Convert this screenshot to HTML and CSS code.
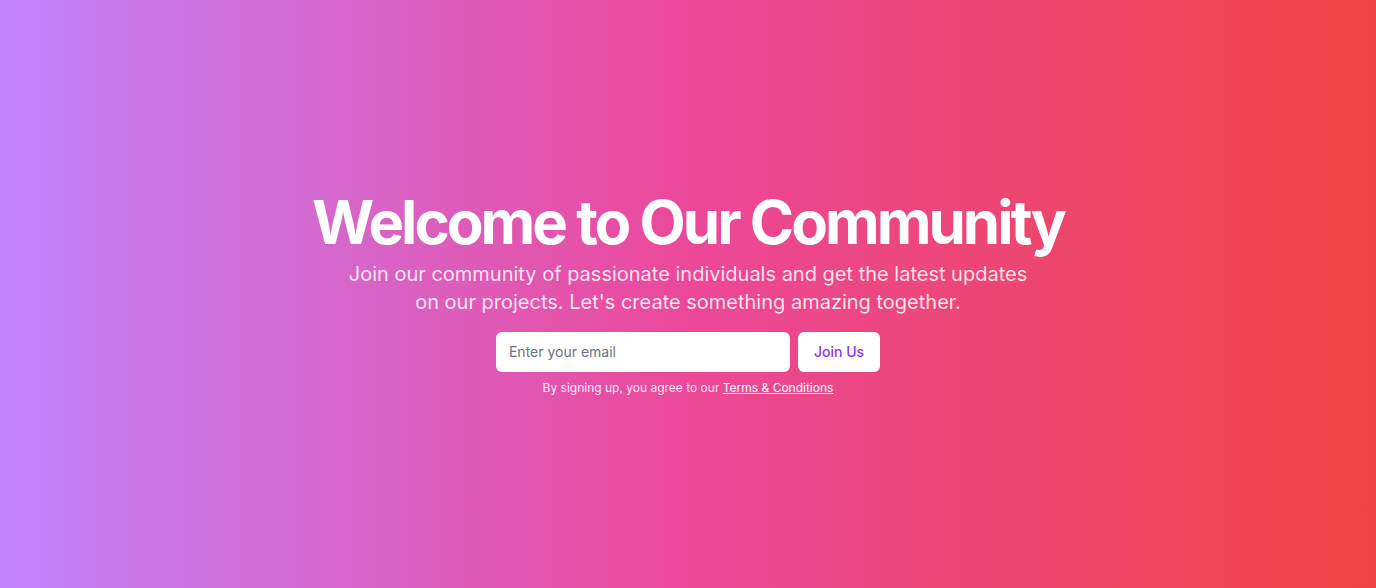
FILE: index.html
```html
<!DOCTYPE html>
<html lang="en">
<head>
<meta charset="utf-8">
<title>Welcome to Our Community</title>
<link rel="stylesheet" href="styles.css">
</head>
<body>
<main class="hero">
  <div class="content">
    <h1 class="title">Welcome to Our Community</h1>
    <p class="subtitle">Join our community of passionate individuals and get the latest updates on our projects. Let's create something amazing together.</p>
    <form class="signup" onsubmit="return false;">
      <input class="email" type="email" placeholder="Enter your email">
      <button class="join" type="submit">Join Us</button>
    </form>
    <p class="terms">By signing up, you agree to our <a href="#" class="terms-link">Terms &amp; Conditions</a></p>
  </div>
</main>
</body>
</html>
```
FILE: styles.css
```css
* { box-sizing: border-box; }
html, body { margin: 0; padding: 0; }
body {
  font-family: Inter, "Noto Sans", sans-serif;
}
.hero {
  min-height: 588px;
  display: flex;
  align-items: center;
  justify-content: center;
  background: linear-gradient(to right, #c084fc, #ec4899, #ef4444);
  color: #fff;
}
.content {
  display: flex;
  flex-direction: column;
  align-items: center;
  text-align: center;
  padding-bottom: 1px;
}
.title {
  margin: 0 0 8px;
  font-size: 60px;
  line-height: 60px;
  font-weight: 700;
  letter-spacing: -3px;
}
.subtitle {
  margin: 0 0 16px;
  max-width: 700px;
  font-size: 20px;
  line-height: 28px;
  color: rgba(255, 255, 255, 0.85);
}
.signup {
  display: flex;
  gap: 8px;
}
.email {
  width: 294px;
  height: 40px;
  border: none;
  border-radius: 6px;
  padding: 0 13px;
  font-family: inherit;
  font-size: 14px;
  color: #374151;
  background: #fff;
  outline: none;
}
.email::placeholder { color: #6b7280; }
.join {
  height: 40px;
  border: none;
  border-radius: 6px;
  padding: 0 16px;
  background: #fff;
  color: #9333ea;
  font-family: inherit;
  font-size: 14px;
  font-weight: 500;
  cursor: pointer;
}
.terms {
  margin: 8px 0 0;
  font-size: 12px;
  line-height: 16px;
  color: rgba(255, 255, 255, 0.9);
}
.terms-link {
  color: #fff;
  text-decoration: underline;
}
```
